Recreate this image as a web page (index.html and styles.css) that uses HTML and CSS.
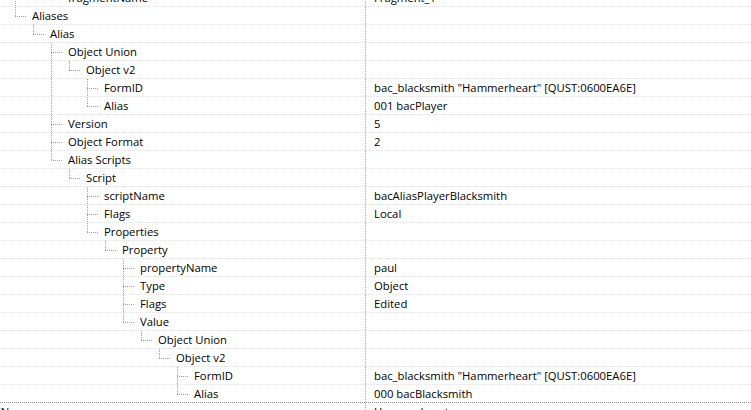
FILE: index.html
```html
<!DOCTYPE html>
<html lang="en">
<head>
  <meta charset="UTF-8" />
  <title>Record View</title>
  <link rel="stylesheet" href="styles.css">
</head>
<body>
  <div class="tree">
    <div class="row"><div class="name"><span class="g pipe"></span><span class="g"></span><span class="g elbow"></span><span class="label">fragmentName</span></div><div class="value">Fragment_1</div></div>
    <div class="row"><div class="name"><span class="g elbow"></span><span class="label">Aliases</span></div><div class="value"></div></div>
    <div class="row"><div class="name"><span class="g"></span><span class="g elbow"></span><span class="label">Alias</span></div><div class="value"></div></div>
    <div class="row"><div class="name"><span class="g"></span><span class="g"></span><span class="g tee"></span><span class="label">Object Union</span></div><div class="value"></div></div>
    <div class="row"><div class="name"><span class="g"></span><span class="g"></span><span class="g pipe"></span><span class="g elbow"></span><span class="label">Object v2</span></div><div class="value"></div></div>
    <div class="row"><div class="name"><span class="g"></span><span class="g"></span><span class="g pipe"></span><span class="g"></span><span class="g tee"></span><span class="label">FormID</span></div><div class="value">bac_blacksmith "Hammerheart" [QUST:0600EA6E]</div></div>
    <div class="row"><div class="name"><span class="g"></span><span class="g"></span><span class="g pipe"></span><span class="g"></span><span class="g elbow"></span><span class="label">Alias</span></div><div class="value">001 bacPlayer</div></div>
    <div class="row"><div class="name"><span class="g"></span><span class="g"></span><span class="g tee"></span><span class="label">Version</span></div><div class="value">5</div></div>
    <div class="row"><div class="name"><span class="g"></span><span class="g"></span><span class="g tee"></span><span class="label">Object Format</span></div><div class="value">2</div></div>
    <div class="row"><div class="name"><span class="g"></span><span class="g"></span><span class="g elbow"></span><span class="label">Alias Scripts</span></div><div class="value"></div></div>
    <div class="row"><div class="name"><span class="g"></span><span class="g"></span><span class="g"></span><span class="g elbow"></span><span class="label">Script</span></div><div class="value"></div></div>
    <div class="row"><div class="name"><span class="in4"></span><span class="g tee"></span><span class="label">scriptName</span></div><div class="value">bacAliasPlayerBlacksmith</div></div>
    <div class="row"><div class="name"><span class="in4"></span><span class="g tee"></span><span class="label">Flags</span></div><div class="value">Local</div></div>
    <div class="row"><div class="name"><span class="in4"></span><span class="g elbow"></span><span class="label">Properties</span></div><div class="value"></div></div>
    <div class="row"><div class="name"><span class="in5"></span><span class="g elbow"></span><span class="label">Property</span></div><div class="value"></div></div>
    <div class="row"><div class="name"><span class="in6"></span><span class="g tee"></span><span class="label">propertyName</span></div><div class="value">paul</div></div>
    <div class="row"><div class="name"><span class="in6"></span><span class="g tee"></span><span class="label">Type</span></div><div class="value">Object</div></div>
    <div class="row"><div class="name"><span class="in6"></span><span class="g tee"></span><span class="label">Flags</span></div><div class="value">Edited</div></div>
    <div class="row"><div class="name"><span class="in6"></span><span class="g elbow"></span><span class="label">Value</span></div><div class="value"></div></div>
    <div class="row"><div class="name"><span class="in7"></span><span class="g elbow"></span><span class="label">Object Union</span></div><div class="value"></div></div>
    <div class="row"><div class="name"><span class="in8"></span><span class="g elbow"></span><span class="label">Object v2</span></div><div class="value"></div></div>
    <div class="row"><div class="name"><span class="in9"></span><span class="g tee"></span><span class="label">FormID</span></div><div class="value">bac_blacksmith "Hammerheart" [QUST:0600EA6E]</div></div>
    <div class="row above-focus"><div class="name"><span class="in9"></span><span class="g elbow"></span><span class="label">Alias</span></div><div class="value">000 bacBlacksmith</div></div>
    <div class="row"><div class="name top"><span class="label">lName</span></div><div class="value">Hammerheart</div></div>
  </div>
</body>
</html>
```

FILE: styles.css
```css
* {
  box-sizing: border-box;
}
body {
  margin: 0;
  background: #ffffff;
  overflow: hidden;
  font-family: 'Open Sans', 'Noto Sans', sans-serif;
  font-size: 11.3px;
  color: #000000;
}
.tree {
  margin-top: -11px;
}
.row {
  display: flex;
  height: 18px;
  line-height: 17px;
  background-image: linear-gradient(to right, #e3e3e3 50%, transparent 50%);
  background-size: 2px 1px;
  background-repeat: repeat-x;
  background-position: 0 17px;
}
.row.above-focus {
  background-image: linear-gradient(to right, #8f8f8f 50%, transparent 50%);
}
.name {
  width: 366px;
  flex-shrink: 0;
  display: flex;
  padding-left: 14px;
  height: 17px;
  background-image: linear-gradient(to bottom, #a8a8a8 50%, transparent 50%);
  background-size: 1px 2px;
  background-repeat: repeat-y;
  background-position: 365px 0;
}
.name.top {
  padding-left: 0;
  margin-left: -2px;
  width: 368px;
  background-position: 367px 0;
}
.value {
  padding-left: 8px;
  white-space: nowrap;
}
.label {
  white-space: nowrap;
}
.g {
  width: 18px;
  flex-shrink: 0;
  position: relative;
}
.in4 { width: 72px; flex-shrink: 0; }
.in5 { width: 90px; flex-shrink: 0; }
.in6 { width: 108px; flex-shrink: 0; }
.in7 { width: 126px; flex-shrink: 0; }
.in8 { width: 144px; flex-shrink: 0; }
.in9 { width: 162px; flex-shrink: 0; }

/* tree guide lines */
.g.pipe::before,
.g.tee::before,
.g.elbow::before {
  content: '';
  position: absolute;
  left: 1px;
  top: 0;
  width: 1px;
  height: 18px;
  background-image: linear-gradient(to bottom, #a0a0a0 50%, transparent 50%);
  background-size: 1px 2px;
}
.g.elbow::before {
  height: 10px;
}
.g.tee::after,
.g.elbow::after {
  content: '';
  position: absolute;
  left: 1px;
  top: 9px;
  width: 12px;
  height: 1px;
  background-image: linear-gradient(to right, #a0a0a0 50%, transparent 50%);
  background-size: 2px 1px;
}
```
